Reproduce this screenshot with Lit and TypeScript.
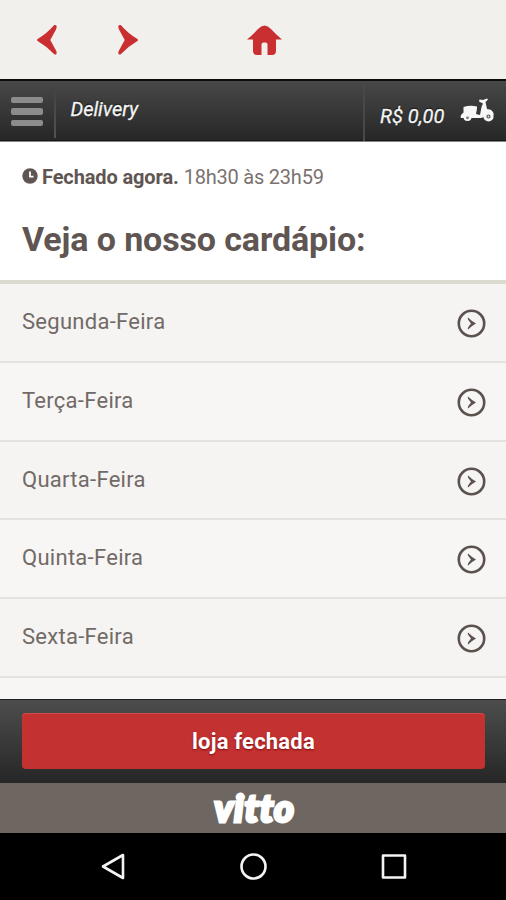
import { LitElement, html, css } from "lit";
import { customElement } from "lit/decorators.js";

@customElement("app-root")
export class AppRoot extends LitElement {
  static styles = css`
    :host { display: flex; flex-direction: column; width: 100%; height: 900px; overflow: hidden; background: #000; font-family: Roboto, "Liberation Sans", sans-serif; color: #5b514e; white-space: nowrap; }
    * { box-sizing: border-box; }
    svg { display: block; flex: none; overflow: visible; }
    .browser { flex: none; height: 79px; background: #f1f0ed; display: flex; align-items: center; padding: 1px 0 0 36px; }
    .prev { margin-right: 61px; }
    .next { margin-right: 107px; }
    .header { flex: none; height: 63px; display: flex; border-top: 2px solid #0c0c0c; border-bottom: 1px solid #858585; background: linear-gradient(#484848, #262626); box-shadow: inset 0 -1px #171717; color: #f4f4f4; font-style: italic; text-shadow: 0 -1px 1px #000; }
    .menu { width: 56px; display: flex; flex-direction: column; gap: 5px; padding: 16px 0 0 11px; }
    .menu i { width: 32px; height: 6.4px; border-radius: 2px; background: #8c8c8c; }
    .rule { width: 2px; margin: 8px 0 3px -2px; background: linear-gradient(#424242, #525252); }
    .title { flex: 1; padding: 15px 0 0 14.5px; font-size: 20px; line-height: 26px; letter-spacing: -0.05px; -webkit-text-stroke: 0.3px #f4f4f4; }
    .cart { width: 143px; display: flex; padding-left: 15px; border-left: 2px solid #484848; }
    .price { width: 80px; padding-top: 22px; font-size: 20px; line-height: 26px; -webkit-text-stroke: 0.3px #f4f4f4; }
    .cart svg { margin-top: 17px; }
    .intro { flex: none; height: 142px; background: #fff; border-bottom: 4px solid #dcd9ce; padding: 22px 22px 0; }
    .status { display: flex; align-items: center; height: 26px; font-size: 20px; color: #7a726f; letter-spacing: -0.22px; }
    .status b { color: #5f5552; font-weight: 700; letter-spacing: -0.12px; margin: 0 5px 0 4px; }
    .status svg { margin-top: -3px; }
    h1 { margin: 29px 0 0; font-size: 34px; line-height: 40px; font-weight: 700; letter-spacing: -0.12px; color: #5f5552; }
    .list { flex: 1; min-height: 0; overflow: hidden; background: #f7f6f4; }
    .row { height: 78.75px; display: flex; align-items: center; justify-content: space-between; padding: 0 20px 0 22px; border-bottom: 2px solid #e3e2df; background: #f5f4f2; font-size: 22px; letter-spacing: 0.28px; color: #716a67; }
    .row:nth-child(even) { background: #f7f6f4; }
    .row span { margin-top: -1.5px; }
    .row svg { margin-top: 2.5px; }
    .action { flex: none; height: 84px; padding: 13px 21px 14px 22px; border-top: 1px solid #202020; background: linear-gradient(#4d4d4d, #262626); }
    .action button { display: block; width: 100%; height: 56px; padding: 0; border: 0; border-radius: 4px; background: #c43131; box-shadow: inset 0 1px #d04a47; color: #fff; font: 700 22px Roboto, sans-serif; letter-spacing: 0.2px; text-shadow: 0 1px 2px #7a0d0d; }
    .brand { flex: none; height: 50px; background: #6e6661; display: flex; align-items: center; justify-content: center; color: #fff; text-shadow: 0 -1px 1px #555; }
    .brand span { font: italic 900 38px/50px Lato, sans-serif; letter-spacing: 0.9px; -webkit-text-stroke: 3px #fff; stroke-linejoin: round; padding: 0 0 2px 3px; }
    .nav { flex: none; height: 67px; background: #000; display: flex; align-items: center; padding-left: 101px; }
    .nav svg { fill: none; stroke: #f4f4f4; stroke-width: 2.6; stroke-linejoin: round; }
    .nav svg + svg { margin-left: 112px; }
  `;

  private days = ["Segunda-Feira", "Terça-Feira", "Quarta-Feira", "Quinta-Feira", "Sexta-Feira", ""];

  render() {
    return html`
      <div class="browser">
        <svg class="prev" width="21" height="32" viewBox="0 0 21 32" fill="#c92f31"><path d="M18 1.3C20.5 .5 21.5 2.5 20 5.5L14.3 16L20 26.5C21.5 29.5 20.5 31.5 18 30Q11 22.5 1.6 17Q.2 16 1.6 15Q11 9.5 18 1.3Z"/></svg>
        <svg class="next" width="21" height="32" viewBox="0 0 21 32" fill="#c92f31"><path d="M3 1.3C.5 .5-.5 2.5 1 5.5L6.7 16L1 26.5C-.5 29.5.5 31.5 3 30Q10 22.5 19.4 17Q20.8 16 19.4 15Q10 9.5 3 1.3Z"/></svg>
        <svg width="36" height="32" viewBox="0 0 36 32" fill="#c92f31"><path d="M1 15.5Q7 10.5 12 5Q18.5-2 25 5Q30 10.5 36 15.5H30V26.5Q30 31 26 31H21.5V20.5Q21.5 18.5 19.5 18.5H17.5Q15.5 18.5 15.5 20.5V31H11Q7 31 7 26.5V15.5Z"/></svg>
      </div>
      <div class="header">
        <div class="menu"><i></i><i></i><i></i></div>
        <div class="rule"></div>
        <div class="title">Delivery</div>
        <div class="cart">
          <div class="price">R$ 0,00</div>
          <svg width="34" height="25" viewBox="0 0 34 25"><path fill="#f8f8f8" d="M3.5 9Q10 7 17 8.5V10.5L16 16L20 17L21.5 9L23 5.5L19 3.5L19.5 1.5L23 2L27 .5L28 1.5L25.5 4L27 11Q33 11 34 17L31 16Q26 14 24 19L21 20H1Q-.5 17.5 3.5 14.5Z"/><circle cx="7.5" cy="19" r="4" fill="#f8f8f8"/><circle cx="7.5" cy="19.8" r="1.4" fill="#777"/><circle cx="28.5" cy="18.5" r="3.6" fill="#555" stroke="#f8f8f8" stroke-width="3"/><circle cx="28.5" cy="18.5" r="1" fill="#ddd"/></svg>
        </div>
      </div>
      <div class="intro">
        <div class="status">
          <svg width="16" height="16" viewBox="0 0 16 16"><circle cx="8" cy="8" r="7.7" fill="#5f5552"/><path d="M8 3.5V8.7H11.5" fill="none" stroke="#fff" stroke-width="1.8"/></svg>
          <b>Fechado agora.</b>18h30 às 23h59
        </div>
        <h1>Veja o nosso cardápio:</h1>
      </div>
      <div class="list">
        ${this.days.map((d) => html`<div class="row"><span>${d}</span><svg width="29" height="29" viewBox="0 0 29 29"><circle cx="14.5" cy="14.5" r="12.7" fill="none" stroke="#5b514e" stroke-width="2.6"/><path d="M11 8.5Q14.5 12 19 14.5Q14.5 17 11 20.5Q10.3 19.5 11.3 18L14 14.5L11.3 11Q10.3 9.5 11 8.5Z" fill="#5b514e"/></svg></div>`)}
      </div>
      <div class="action"><button>loja fechada</button></div>
      <div class="brand"><span>vitto</span></div>
      <div class="nav">
        <svg width="24" height="27" viewBox="0 0 24 27"><path d="M22 2V25L2 13.5Z"/></svg>
        <svg width="27" height="27" viewBox="0 0 27 27"><circle cx="16.5" cy="13.5" r="12"/></svg>
        <svg width="24" height="27" viewBox="0 0 24 27"><rect x="7" y="2.5" width="22" height="22"/></svg>
      </div>
    `;
  }
}
